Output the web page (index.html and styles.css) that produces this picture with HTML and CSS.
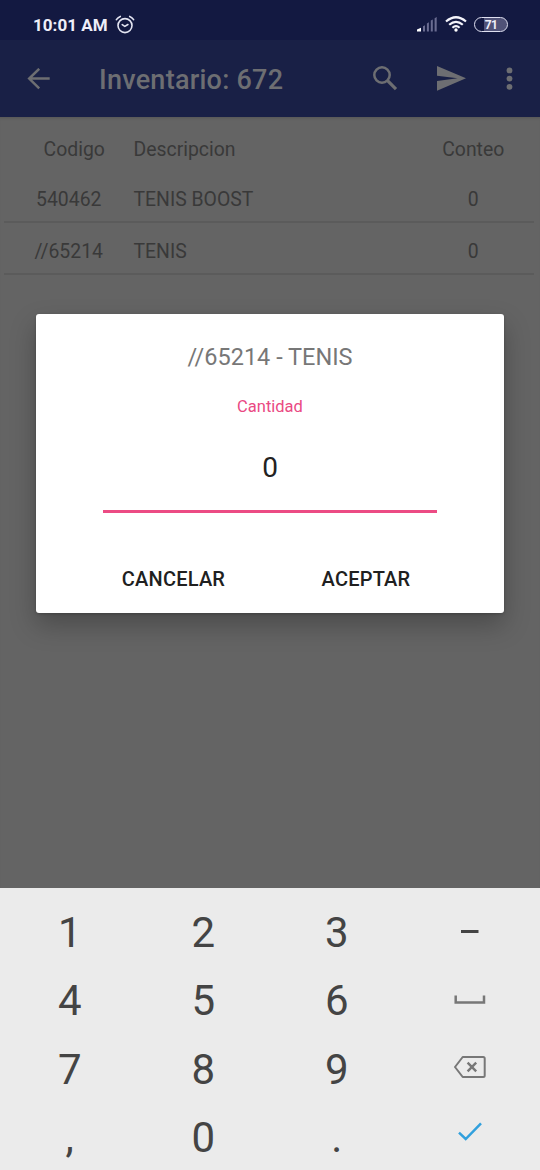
FILE: index.html
```html
<!DOCTYPE html>
<html lang="es">
<head>
<meta charset="utf-8">
<title>Inventario</title>
<link rel="stylesheet" href="styles.css">
</head>
<body>
<div class="screen">
  <header class="status">
    <span class="clock">10:01 AM</span>
    <svg class="alarm" width="20" height="20" viewBox="0 0 20 20" fill="none" stroke="#e4e5f2" stroke-width="1.6" stroke-linecap="round"><circle cx="10" cy="10.6" r="7"/><path d="M1.4 4.7Q2.8 2.3 5.3 1.4M18.6 4.7Q17.2 2.3 14.7 1.4M7.2 9.7L9.8 11.4 12.9 9.5"/></svg>
    <svg class="signal" width="20" height="15" viewBox="0 0 20 15"><path fill="#fff" d="M0 14.5V12.5L4 10.7V14.5Z"/><path fill="#6a6c91" d="M6 9.3L8 8.3V14.5H6ZM9.9 6.5L11.9 5.2V14.5H9.9ZM13.8 3.6L15.8 2.5V14.5H13.8ZM17.6 1.2L19.7 0V14.5H17.6Z"/></svg>
    <svg class="wifi" width="22" height="16" viewBox="0 0 22 16" fill="none" stroke="#f4f4fb" stroke-width="2.2"><path d="M1 5.5Q11-3 21 5.5M4.2 8.8Q11 2.8 17.8 8.8M7.4 11.8Q11 8.5 14.6 11.8"/><circle cx="11" cy="14" r="1.7" fill="#fff" stroke="none"/></svg>
    <span class="battery">71</span>
  </header>
  <nav class="appbar">
    <svg class="back" width="24" height="22" viewBox="0 0 24 22" fill="none" stroke="currentColor" stroke-width="2.5"><path d="M22.7 10.6H2.2M12.2 .8L2.2 10.6 12.2 20.4"/></svg>
    <h1 class="title">Inventario: 672</h1>
    <svg class="search" width="26" height="26" viewBox="0 0 26 26" fill="none" stroke="currentColor"><circle cx="10" cy="9" r="7.7" stroke-width="2.5"/><path stroke-width="3.2" d="M15.3 14.3L24 23.1"/></svg>
    <svg class="send" width="29" height="25" viewBox="0 0 29 25" fill="currentColor"><path d="M0 0L29 12.3 0 24.7V15L20.5 12.3 0 9.7Z"/></svg>
    <svg class="more" width="7" height="24" viewBox="0 0 7 24" fill="currentColor"><circle cx="3.5" cy="3.4" r="2.9"/><circle cx="3.5" cy="11.6" r="2.9"/><circle cx="3.5" cy="19.8" r="2.9"/></svg>
  </nav>
  <main class="content">
    <div class="row head"><span class="code">Codigo</span><span class="desc">Descripcion</span><span class="count">Conteo</span></div>
    <div class="row first"><span class="code">540462</span><span class="desc">TENIS BOOST</span><span class="count">0</span></div>
    <div class="row"><span class="code">//65214</span><span class="desc">TENIS</span><span class="count">0</span></div>
  </main>
  <section class="keypad">
    <span>1</span><span>2</span><span>3</span>
    <span><svg width="18" height="3" viewBox="0 0 18 3"><path fill="#444" d="M0 0H17.5V3H0Z"/></svg></span>
    <span>4</span><span>5</span><span>6</span>
    <span><svg width="32" height="10" viewBox="0 0 32 10" fill="none" stroke="#777" stroke-width="2.5"><path d="M1.7 .5V7.6H30V.5"/></svg></span>
    <span>7</span><span>8</span><span>9</span>
    <span><svg class="erase" width="32" height="22" viewBox="0 0 32 22" fill="none" stroke="#777" stroke-width="2" stroke-linejoin="round"><path d="M8.7 1H29.2Q30.7 1 30.7 2.5V19.5Q30.7 21 29.2 21H8.7L1 11Z"/><path stroke-width="2.4" d="M13.6 6.7L22.2 15.4M22.2 6.7L13.6 15.4"/></svg></span>
    <span>,</span><span>0</span><span>.</span>
    <span><svg class="check" width="24" height="19" viewBox="0 0 24 19" fill="none" stroke="#31a0dd" stroke-width="2.5"><path d="M1 10.7L7.7 17 23 1.3"/></svg></span>
  </section>
  <div class="dialog" role="dialog">
    <h2 class="product">//65214 - TENIS</h2>
    <div class="label">Cantidad</div>
    <div class="field">0</div>
    <div class="actions"><button class="cancel">CANCELAR</button><button class="accept">ACEPTAR</button></div>
  </div>
</div>
</body>
</html>
```
FILE: styles.css
```css
* { box-sizing: border-box; }
body { margin: 0; font-family: Roboto, "Liberation Sans", sans-serif; }
.screen { position: relative; width: 540px; height: 1170px; display: flex; flex-direction: column; overflow: hidden; background: #646464; }
.status { flex: none; height: 40px; display: flex; align-items: flex-start; background: #131941; color: #eeeef8; padding-left: 33px; }
.clock { font-size: 17px; line-height: 20px; font-weight: 700; margin-top: 15px; width: 82px; letter-spacing: .05px; white-space: nowrap; }
.alarm { margin-top: 15px; }
.signal { margin: 17px 0 0 282px; }
.wifi { margin: 16px 0 0 8px; }
.battery { margin: 17px 0 0 7px; width: 34px; height: 15px; border: 1.5px solid #dedff0; border-radius: 8px; font-size: 12px; line-height: 14px; letter-spacing: -.6px; font-weight: 700; text-align: center; background: linear-gradient(90deg, #131941 28%, #505277 28%); }
.appbar { flex: none; height: 77px; display: flex; align-items: flex-start; background: #192046; color: #6d6e72; padding-left: 27px; }
.back { margin-top: 28px; }
.title { margin: 24px 0 0 48px; width: 273px; font-size: 27px; letter-spacing: .25px; line-height: 32px; font-weight: 500; white-space: nowrap; }
.search { margin-top: 26px; }
.send { margin: 26px 0 0 39px; }
.more { margin: 27px 0 0 40px; }
.content { flex: 1; color: #393939; font-size: 19.4px; padding: 8px 6px 0 4px; box-shadow: inset 0 3px 3px -2px #555; }
.row { display: grid; grid-template-columns: 129.5px 279px 1fr; height: 52px; padding-top: 7px; line-height: 44px; border-bottom: 2px solid #5b5b5b; }
.row.head, .row.first { height: 49px; padding-top: 4px; }
.row.head { border: 0; padding-top: 3px; }
.code { text-align: center; }
.head .code { padding-left: 11px; }
.count { text-align: center; }
.keypad { flex: none; height: 282px; background: #ebebeb; color: #444; padding: 10px 3px 0; display: grid; grid-template-columns: repeat(4, 133.5px); grid-auto-rows: 68.4px; font-size: 42px; line-height: 70px; text-align: center; }
.keypad span { display: block; }
.keypad span:nth-child(4n) { display: flex; align-items: center; justify-content: center; padding-bottom: 2px; }
.keypad .erase { margin-bottom: 2px; }
.keypad .check { margin-bottom: 9px; }
.dialog { position: absolute; left: 36px; top: 314px; width: 468px; height: 299px; background: #fff; border-radius: 3px; box-shadow: 0 12px 26px rgba(0,0,0,.25), 0 1px 3px rgba(0,0,0,.2); text-align: center; padding-top: 28px; }
.product { margin: 0; font-size: 23.5px; line-height: 30px; font-weight: 400; color: #777; }
.label { margin-top: 25px; font-size: 16.5px; line-height: 20px; color: #ea4983; }
.field { width: 334px; margin: 34px auto 0; height: 62px; font-size: 28px; line-height: 34px; color: #222; border-bottom: 3px solid #ec4b84; }
.actions { display: flex; margin-top: 54px; padding-left: 79px; }
.actions button { border: 0; padding: 0; background: none; font-family: inherit; font-size: 20px; letter-spacing: .2px; line-height: 24px; font-weight: 500; color: #202020; }
.cancel { width: 117px; }
.accept { width: 102px; margin-left: 83px; }
```
